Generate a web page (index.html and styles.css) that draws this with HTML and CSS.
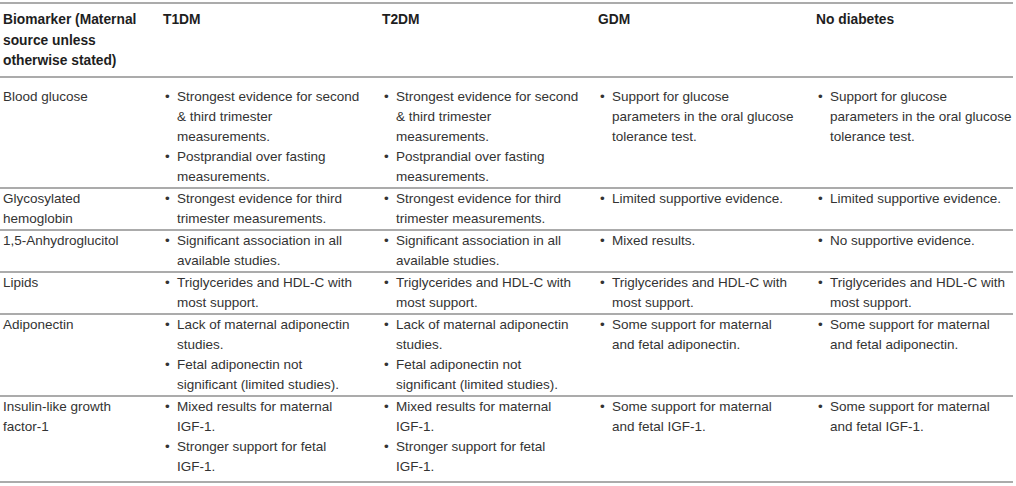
FILE: index.html
```html
<!DOCTYPE html>
<html lang="en">
<head>
    <meta charset="UTF-8">
    <meta name="viewport" content="width=device-width, initial-scale=1.0">
    <title>Biomarkers by diabetes type</title>
    <link rel="stylesheet" href="styles.css">
</head>
<body>
    <table class="bio-table">
        <colgroup>
            <col class="c-marker">
            <col class="c-t1">
            <col class="c-t2">
            <col class="c-gdm">
            <col class="c-none">
        </colgroup>
        <thead>
            <tr>
                <th>Biomarker (Maternal source unless otherwise stated)</th>
                <th>T1DM</th>
                <th>T2DM</th>
                <th>GDM</th>
                <th>No diabetes</th>
            </tr>
        </thead>
        <tbody>
            <tr>
                <td>Blood glucose</td>
                <td>
                    <ul>
                        <li>Strongest evidence for second &amp; third trimester measurements.</li>
                        <li>Postprandial over fasting measurements.</li>
                    </ul>
                </td>
                <td>
                    <ul>
                        <li>Strongest evidence for second &amp; third trimester measurements.</li>
                        <li>Postprandial over fasting measurements.</li>
                    </ul>
                </td>
                <td>
                    <ul>
                        <li>Support for glucose parameters in the oral glucose tolerance test.</li>
                    </ul>
                </td>
                <td>
                    <ul>
                        <li>Support for glucose parameters in the oral glucose tolerance test.</li>
                    </ul>
                </td>
            </tr>
            <tr>
                <td>Glycosylated hemoglobin</td>
                <td><ul><li>Strongest evidence for third trimester measurements.</li></ul></td>
                <td><ul><li>Strongest evidence for third trimester measurements.</li></ul></td>
                <td><ul><li>Limited supportive evidence.</li></ul></td>
                <td><ul><li>Limited supportive evidence.</li></ul></td>
            </tr>
            <tr>
                <td>1,5-Anhydroglucitol</td>
                <td><ul><li>Significant association in all available studies.</li></ul></td>
                <td><ul><li>Significant association in all available studies.</li></ul></td>
                <td><ul><li>Mixed results.</li></ul></td>
                <td><ul><li>No supportive evidence.</li></ul></td>
            </tr>
            <tr>
                <td>Lipids</td>
                <td><ul><li>Triglycerides and HDL-C with most support.</li></ul></td>
                <td><ul><li>Triglycerides and HDL-C with most support.</li></ul></td>
                <td><ul><li>Triglycerides and HDL-C with most support.</li></ul></td>
                <td><ul><li>Triglycerides and HDL-C with most support.</li></ul></td>
            </tr>
            <tr>
                <td>Adiponectin</td>
                <td>
                    <ul>
                        <li>Lack of maternal adiponectin studies.</li>
                        <li>Fetal adiponectin not significant (limited studies).</li>
                    </ul>
                </td>
                <td>
                    <ul>
                        <li>Lack of maternal adiponectin studies.</li>
                        <li>Fetal adiponectin not significant (limited studies).</li>
                    </ul>
                </td>
                <td><ul><li>Some support for maternal and fetal adiponectin.</li></ul></td>
                <td><ul><li>Some support for maternal and fetal adiponectin.</li></ul></td>
            </tr>
            <tr>
                <td>Insulin-like growth <span class="nb">factor-1</span></td>
                <td>
                    <ul>
                        <li>Mixed results for maternal <span class="nb">IGF-1.</span></li>
                        <li>Stronger support for fetal <span class="nb">IGF-1.</span></li>
                    </ul>
                </td>
                <td>
                    <ul>
                        <li>Mixed results for maternal <span class="nb">IGF-1.</span></li>
                        <li>Stronger support for fetal <span class="nb">IGF-1.</span></li>
                    </ul>
                </td>
                <td><ul><li>Some support for maternal and fetal IGF-1.</li></ul></td>
                <td><ul><li>Some support for maternal and fetal IGF-1.</li></ul></td>
            </tr>
        </tbody>
    </table>
</body>
</html>
```

FILE: styles.css
```css
body {
    margin: 0;
    padding: 2px 0 0 0;
    background: #fff;
    font-family: 'Liberation Sans', Arial, Helvetica, sans-serif;
    font-size: 13.5px;
    color: #333;
}

.bio-table {
    width: 1013px;
    table-layout: fixed;
    border-collapse: separate;
    border-spacing: 0;
}

.c-marker { width: 160px; }
.c-t1 { width: 219px; }
.c-t2 { width: 216px; }
.c-gdm { width: 218px; }
.c-none { width: 200px; }

th, td {
    text-align: left;
    vertical-align: top;
    padding: 0 17px 0 3px;
    border-bottom: 2px solid #ababab;
}

th {
    font-size: 13.8px;
    font-weight: bold;
    line-height: 20.5px;
    color: #1e1e1e;
    border-top: 2px solid #ababab;
    padding-top: 6px;
    padding-bottom: 4px;
}

td {
    line-height: 20px;
}

th:first-child, td:first-child { padding-right: 10px; }
th:nth-child(2), td:nth-child(2) { padding-right: 18px; }
th:nth-child(3), td:nth-child(3) { padding-right: 15px; }
th:nth-child(4), td:nth-child(4) { padding-right: 17px; }
th:last-child, td:last-child { padding-right: 0; }

tbody tr:first-child td { padding-top: 9px; }
tbody tr:last-child td { padding-bottom: 4px; }

.nb {
    white-space: nowrap;
}

ul {
    list-style: none;
    margin: 0;
    padding: 0;
}

li {
    padding-left: 14px;
}

li::before {
    content: "\2022";
    display: inline-block;
    width: 12px;
    margin-left: -12px;
}
```
